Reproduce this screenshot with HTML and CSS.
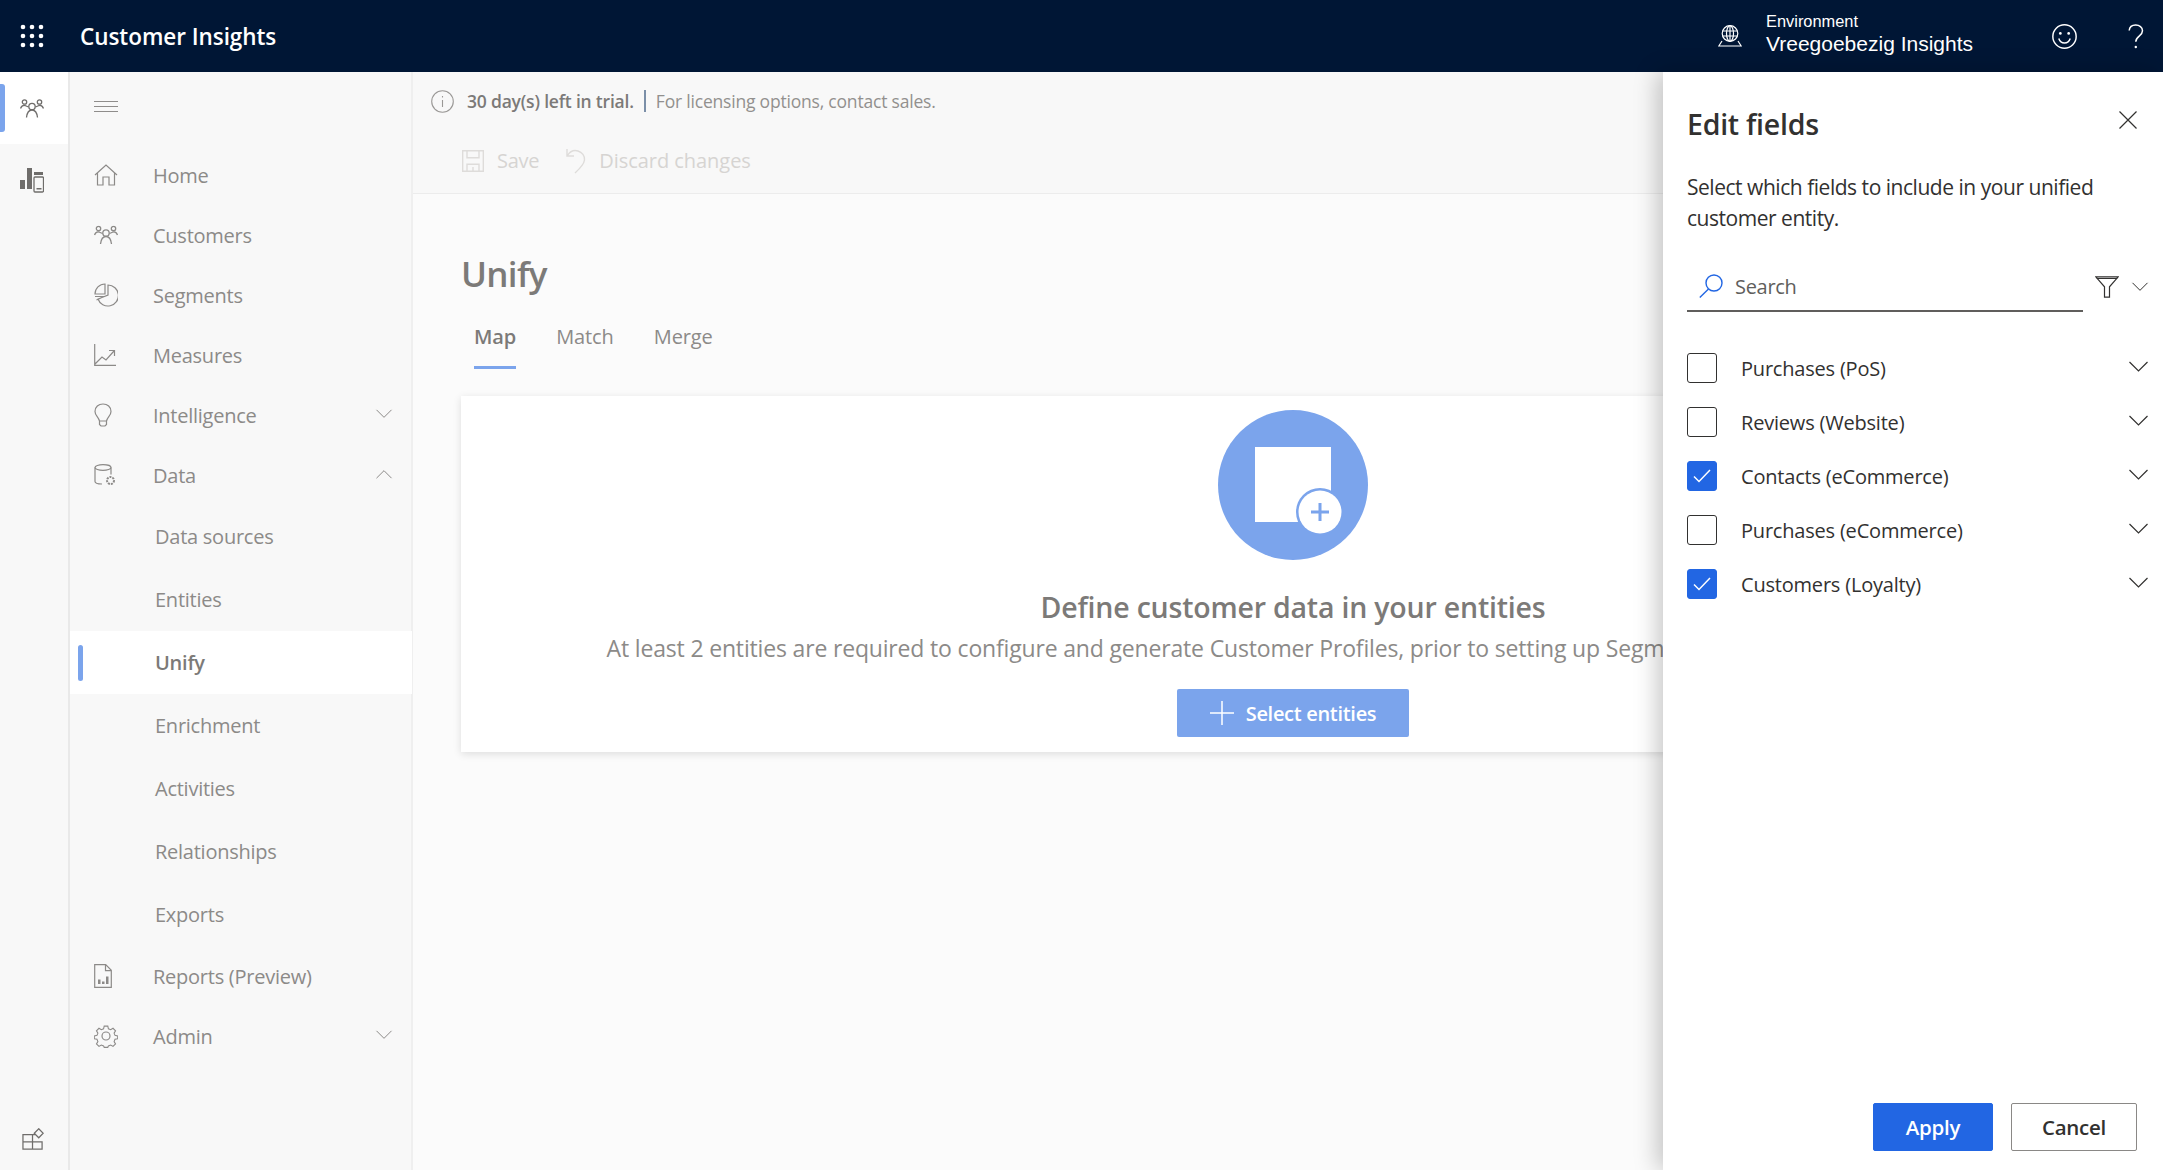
FILE: index.html
```html
<!DOCTYPE html>
<html lang="en">
<head>
    <meta charset="UTF-8" />
    <title>Customer Insights - Unify</title>
    <link rel="stylesheet" href="styles.css">
</head>
<body>
    <svg class="defs" width="0" height="0">
        <symbol id="chev" viewBox="0 0 20 12"><path d="M1 1l9 9 9-9" fill="none" stroke="currentColor" stroke-width="1.2"/></symbol>
        <symbol id="people" viewBox="0 0 24 19" fill="none" stroke="currentColor" stroke-width="1.3">
            <circle cx="4.5" cy="3" r="2.2"/><circle cx="19.5" cy="3" r="2.2"/><circle cx="12" cy="7.5" r="3.2"/>
            <path d="M.5 9.5C1.5 7 3 6 5 6.500l3.500 1.500M23.500 9.500C22.500 7 21 6 19 6.500l-3.500 1.500M6.500 18.500c.5-4.500 2.500-7.500 5.500-7.500s5 3 5.500 7.500"/>
        </symbol>
        <symbol id="check" viewBox="0 0 18 14"><path d="M1 7.500l5 5L17 1" fill="none" stroke="#fff" stroke-width="1.500"/></symbol>
    </svg>

    <header class="topbar">
        <svg class="waffle" width="24" height="24" viewBox="0 0 24 24" fill="#fff">
            <circle cx="3" cy="3" r="2.300"/><circle cx="12" cy="3" r="2.300"/><circle cx="21" cy="3" r="2.300"/>
            <circle cx="3" cy="12" r="2.300"/><circle cx="12" cy="12" r="2.300"/><circle cx="21" cy="12" r="2.300"/>
            <circle cx="3" cy="21" r="2.300"/><circle cx="12" cy="21" r="2.300"/><circle cx="21" cy="21" r="2.300"/>
        </svg>
        <div class="app-name">Customer Insights</div>
        <svg class="globe" width="24" height="22" viewBox="0 0 24 22" fill="none" stroke="#fff" stroke-width="1.200">
            <circle cx="12" cy="8.500" r="7.800"/><ellipse cx="12" cy="8.500" rx="3.500" ry="7.800"/>
            <path d="M4.500 6h15M4.500 11h15M12 .7v15.500M4 16L.8 21h22.400L20 16"/>
        </svg>
        <div class="env">
            <div class="env-label">Environment</div>
            <div class="env-name">Vreegoebezig Insights</div>
        </div>
        <svg class="smile" width="25" height="25" viewBox="0 0 24 24" fill="none" stroke="#fff" stroke-width="1.400">
            <circle cx="12" cy="12" r="11.200"/><path d="M6.500 14c1 3 3 4.300 5.500 4.300s4.500-1.300 5.500-4.300"/>
            <circle cx="8" cy="9" r="1.300" fill="#fff" stroke="none"/><circle cx="16" cy="9" r="1.300" fill="#fff" stroke="none"/>
        </svg>
        <svg class="help" width="16" height="25" viewBox="0 0 16 25" fill="none" stroke="#fff" stroke-width="1.500">
            <path d="M1.200 6.500C1.500 3 4 1 7.700 1s6.800 2.300 6.800 5.700c0 5.500-6.700 5.300-6.700 11"/>
            <circle cx="7.800" cy="23" r="1.200" fill="#fff" stroke="none"/>
        </svg>
    </header>

    <div class="layout">
        <aside class="rail">
            <div class="rail-item active">
                <svg width="24" height="19"><use href="#people"/></svg>
            </div>
            <div class="rail-item">
                <svg width="24" height="25" viewBox="0 0 24 25" fill="#6f6d6b">
                    <rect x="0" y="12" width="5" height="9"/><rect x="7" y="0" width="5" height="21"/>
                    <rect x="14" y="4" width="9" height="3"/>
                    <rect x="14" y="9" width="9.500" height="15" rx="1" fill="#f8f8f8" stroke="#6f6d6b" stroke-width="1.300"/>
                    <rect x="16.500" y="20" width="5" height="1.500"/>
                </svg>
            </div>
            <div class="rail-bottom">
                <svg width="22" height="22" viewBox="0 0 23 23" fill="none" stroke="#6f6d6b" stroke-width="1.300">
                    <path d="M1 7h10v15H1zM1 14.500h20V22H11M11 7h3"/><path d="M17.500 .8l4.700 4.700-4.700 4.700-4.700-4.700z"/>
                </svg>
            </div>
        </aside>

        <nav class="nav">
            <div class="nav-top">
                <svg width="24" height="12" viewBox="0 0 24 12" fill="none" stroke="#8f8d8b"><path d="M0 .5h24M0 5.500h24M0 10.500h24"/></svg>
            </div>
            <a class="nav-item">
                <svg class="nav-icon" width="24" height="22" viewBox="0 0 24 22" fill="none" stroke="currentColor" stroke-width="1.200"><path d="M1 11L12 1l11 10M3.500 9v12h5.500v-8h6v8h5.500V9"/></svg>
                Home
            </a>
            <a class="nav-item"><svg class="nav-icon" width="24" height="19"><use href="#people"/></svg>Customers</a>
            <a class="nav-item">
                <svg class="nav-icon" width="24" height="24" viewBox="0 0 24 24" fill="none" stroke="currentColor" stroke-width="1.200">
                    <path d="M14 2a10.500 10.500 0 1 1-10 14l10-4zM11 1A10 10 0 0 0 1 11h10zM1 13.500h9L2.500 17"/>
                </svg>
                Segments
            </a>
            <a class="nav-item">
                <svg class="nav-icon" width="22" height="22" viewBox="0 0 22 22" fill="none" stroke="currentColor" stroke-width="1.200"><path d="M.7 0v21.400H22M1 20l7-7 4 3 8-9M15 6.500h5.500V12"/></svg>
                Measures
            </a>
            <a class="nav-item">
                <svg class="nav-icon" width="18" height="24" viewBox="0 0 18 24" fill="none" stroke="currentColor" stroke-width="1.200"><path d="M5.500 18C4.500 14 1 12.500 1 8.500 1 4 4.500 1 9 1s8 3 8 7.500c0 4-3.500 5.500-4.500 9.500zM5.500 18v3.500l1.500 1.500h4l1.500-1.500V18"/></svg>
                Intelligence
                <svg class="nav-chev" width="18" height="10"><use href="#chev"/></svg>
            </a>
            <a class="nav-item">
                <svg class="nav-icon" width="22" height="22" viewBox="0 0 22 22" fill="none" stroke="currentColor" stroke-width="1.200">
                    <ellipse cx="9" cy="3.500" rx="8" ry="2.800"/><path d="M1 3.500v14c0 1.500 3 2.500 7 2.500M17 3.500v7"/><circle cx="16.500" cy="16.500" r="3.500" stroke-width="2" stroke-dasharray="2 1"/>
                </svg>
                Data
                <svg class="nav-chev flip" width="18" height="10"><use href="#chev"/></svg>
            </a>
            <a class="nav-sub">Data sources</a>
            <a class="nav-sub">Entities</a>
            <a class="nav-sub current">Unify</a>
            <a class="nav-sub">Enrichment</a>
            <a class="nav-sub">Activities</a>
            <a class="nav-sub">Relationships</a>
            <a class="nav-sub">Exports</a>
            <a class="nav-item">
                <svg class="nav-icon" width="18" height="24" viewBox="0 0 18 24" fill="none" stroke="currentColor" stroke-width="1.200">
                    <path d="M.7.7h11l5.600 5.600v17H.7zM11.500.7v6h6"/>
                    <path d="M4 15.500h2.500V20H4zM8 17.500h2.500V20H8zM12 12.500h2.500V20H12z" fill="currentColor" stroke="none"/>
                </svg>
                Reports (Preview)
            </a>
            <a class="nav-item">
                <svg class="nav-icon" width="24" height="24" viewBox="0 0 24 24" fill="none" stroke="currentColor" stroke-width="1.200">
                    <circle cx="12" cy="12" r="4"/>
                    <path d="M10 1h4l.7 3 2.500 1 2.600-1.600 2.800 2.800-1.600 2.600 1 2.500 3 .7v3l-3 .7-1 2.500 1.600 2.600-2.800 2.800-2.600-1.600-2.500 1-.7 1.600h-4l-.7-1.600-2.500-1-2.600 1.600-2.800-2.800 1.600-2.600-1-2.500-3-.7v-3l3-.7 1-2.500L1.400 6.200l2.800-2.800 2.600 1.600 2.500-1z" transform="translate(1.200 1.200) scale(.9)"/>
                </svg>
                Admin
                <svg class="nav-chev" width="18" height="10"><use href="#chev"/></svg>
            </a>
        </nav>

        <main class="main">
            <div class="trial">
                <svg width="23" height="23" viewBox="0 0 23 23" fill="none" stroke="#9a9896" stroke-width="1.100">
                    <circle cx="11.500" cy="11.500" r="10.800"/><path d="M11.500 10v7M11.500 6v1.500"/>
                </svg>
                <span class="trial-days">30 day(s) left in trial.</span>
                <span class="trial-sep"></span>
                <span>For licensing options, contact sales.</span>
            </div>
            <div class="toolbar">
                <button class="tool">
                    <svg width="22" height="22" viewBox="0 0 22 22" fill="none" stroke="#dedcda" stroke-width="1.400"><path d="M.7.7h20.600v20.600H.7zM5 .7v7h12v-7M5 21.300v-7h12v7M11 17v4"/></svg>
                    Save
                </button>
                <button class="tool wide">
                    <svg width="20" height="26" viewBox="0 0 20 26" fill="none" stroke="#dedcda" stroke-width="1.400"><path d="M1 1v7h7M1.500 7.500C4 3.500 8 1.800 12 3s7 5 6.500 9-4 8-9.500 13"/></svg>
                    Discard changes
                </button>
            </div>
            <div class="page">
                <h1 class="page-title">Unify</h1>
                <div class="tabs">
                    <a class="tab active">Map</a>
                    <a class="tab">Match</a>
                    <a class="tab">Merge</a>
                </div>
                <section class="card">
                    <svg class="card-art" width="150" height="150" viewBox="0 0 150 150">
                        <circle cx="75" cy="75" r="75" fill="#7ba4ec"/>
                        <rect x="37" y="37" width="76" height="75" fill="#fff"/>
                        <circle cx="102" cy="102" r="24" fill="#7ba4ec"/>
                        <circle cx="102" cy="102" r="21.500" fill="#fff"/>
                        <path d="M102 93v18M93 102h18" stroke="#7ba4ec" stroke-width="3" fill="none"/>
                    </svg>
                    <h2 class="card-title">Define customer data in your entities</h2>
                    <p class="card-text">At least 2 entities are required to configure and generate Customer Profiles, prior to setting up Segments, Measures and Insights.</p>
                    <button class="select-btn">
                        <svg width="24" height="24" viewBox="0 0 24 24" stroke="#fff" stroke-width="1.500" fill="none"><path d="M12 0v24M0 12h24"/></svg>
                        Select entities
                    </button>
                </section>
            </div>
        </main>

        <aside class="panel">
            <div class="panel-head">
                <h2 class="panel-title">Edit fields</h2>
                <svg class="panel-close" width="18" height="18" viewBox="0 0 18 18" stroke="#323130" stroke-width="1.200" fill="none"><path d="M.5.5l17 17M17.500.5l-17 17"/></svg>
            </div>
            <p class="panel-desc">Select which fields to include in your unified customer entity.</p>
            <div class="search-row">
                <div class="search">
                    <svg width="24" height="24" viewBox="0 0 24 24" fill="none" stroke="#2266e3" stroke-width="1.400"><circle cx="15" cy="9" r="8"/><path d="M9.500 15L.8 23.500"/></svg>
                    <span>Search</span>
                </div>
                <svg class="filter" width="24" height="22" viewBox="0 0 24 22" fill="none" stroke="#323130" stroke-width="1.200"><path d="M.8.8h22.400l-8.700 10v10.400h-5V10.800zM1.500 2.500h21"/></svg>
                <svg class="filter-chev" width="18" height="10"><use href="#chev"/></svg>
            </div>
            <ul class="fields">
                <li class="field"><span class="box"></span>Purchases (PoS)<svg class="field-chev" width="21" height="12"><use href="#chev"/></svg></li>
                <li class="field"><span class="box"></span>Reviews (Website)<svg class="field-chev" width="21" height="12"><use href="#chev"/></svg></li>
                <li class="field"><span class="box checked"><svg width="18" height="14"><use href="#check"/></svg></span>Contacts (eCommerce)<svg class="field-chev" width="21" height="12"><use href="#chev"/></svg></li>
                <li class="field"><span class="box"></span>Purchases (eCommerce)<svg class="field-chev" width="21" height="12"><use href="#chev"/></svg></li>
                <li class="field"><span class="box checked"><svg width="18" height="14"><use href="#check"/></svg></span>Customers (Loyalty)<svg class="field-chev" width="21" height="12"><use href="#chev"/></svg></li>
            </ul>
            <div class="panel-foot">
                <button class="btn primary">Apply</button>
                <button class="btn">Cancel</button>
            </div>
        </aside>
    </div>
</body>
</html>
```

FILE: styles.css
```css
* {
    box-sizing: border-box;
}
body {
    margin: 0;
    height: 1170px;
    overflow: hidden;
    font-family: "Open Sans", "Noto Sans", sans-serif;
    background: #fbfbfb;
    display: flex;
    flex-direction: column;
}
.defs {
    position: absolute;
}
h1, h2, p, ul {
    margin: 0;
    padding: 0;
}

/* top bar */
.topbar {
    height: 72px;
    flex: none;
    background: #001635;
    color: #fff;
    display: flex;
    align-items: center;
    padding-left: 20px;
}
.app-name {
    margin-left: 36px;
    font-size: 22.500px;
    font-weight: 600;
    letter-spacing: -0.05px;
}
.globe {
    margin-left: auto;
}
.env {
    margin-left: 24px;
    font-family: "Liberation Sans", sans-serif;
    width: 286px;
}
.env-label {
    font-size: 16.400px;
    line-height: 20px;
    margin-top: -4px;
}
.env-name {
    font-size: 21px;
    line-height: 26px;
}
.help {
    margin-left: 51px;
    margin-right: 19px;
}

.layout {
    flex: 1;
    display: flex;
    min-height: 0;
}

/* icon rail */
.rail {
    width: 70px;
    flex: none;
    background: #f8f8f8;
    border-right: 2px solid #e9e9e9;
    display: flex;
    flex-direction: column;
}
.rail-item {
    height: 72px;
    display: flex;
    align-items: center;
    justify-content: center;
    color: #6f6d6b;
    position: relative;
}
.rail-item svg {
    margin-right: 4px;
}
.rail-item.active {
    background: #fff;
}
.rail-item.active::before {
    content: "";
    position: absolute;
    left: 0;
    top: 12px;
    width: 5px;
    height: 48px;
    background: #7ba4ec;
    border-radius: 0 3px 3px 0;
}
.rail-bottom {
    margin-top: auto;
    padding: 0 0 15px 22px;
}

/* nav */
.nav {
    width: 343px;
    flex: none;
    background: #f8f8f8;
    border-right: 2px solid #efefef;
    color: #8c8a88;
    font-size: 20px;
    letter-spacing: -0.25px;
}
.nav-top {
    height: 73px;
    padding: 29px 0 0 24px;
}
.nav-top svg {
    display: block;
}
.nav-item {
    height: 60px;
    display: flex;
    align-items: center;
    position: relative;
    padding-left: 83px;
}
.nav-icon {
    position: absolute;
    left: 24px;
    top: 50%;
    transform: translateY(-50%);
}
.nav-chev {
    margin-left: auto;
    margin-right: 18px;
    margin-top: -2px;
}
.flip {
    transform: rotate(180deg);
}
.nav-sub {
    height: 63px;
    display: flex;
    align-items: center;
    padding-left: 85px;
}
.nav-sub.current {
    background: #fff;
    color: #7c7a78;
    font-weight: 600;
    position: relative;
    margin-right: -1px;
}
.nav-sub.current::before {
    content: "";
    position: absolute;
    left: 8px;
    top: 14px;
    width: 5px;
    height: 36px;
    background: #7ba4ec;
    border-radius: 3px;
}

/* main area */
.main {
    flex: 1;
    min-width: 0;
    overflow: hidden;
}
.trial {
    height: 58px;
    background: #f8f8f8;
    display: flex;
    align-items: center;
    padding: 0 0 0 18px;
    font-size: 17.500px;
    letter-spacing: -0.2px;
    color: #92908e;
}
.trial-days {
    margin-left: 13px;
    color: #7c7a78;
    font-weight: 600;
}
.trial-sep {
    width: 2px;
    height: 22px;
    background: #7b8fa8;
    margin: 0 10px;
}
.toolbar {
    height: 64px;
    background: #f8f8f8;
    border-bottom: 1px solid #ececec;
    display: flex;
    align-items: flex-start;
    padding: 17px 0 0 49px;
    gap: 27px;
}
.tool {
    border: 0;
    background: none;
    padding: 0;
    font: inherit;
    font-size: 20px;
    letter-spacing: -0.25px;
    color: #d6d4d2;
    display: flex;
    align-items: center;
    gap: 13px;
    height: 27px;
}
.tool.wide {
    letter-spacing: -0.05px;
}
.page {
    padding: 56px 0 0 48px;
}
.page-title {
    font-size: 35px;
    line-height: 48px;
    font-weight: 600;
    letter-spacing: -0.7px;
    color: #7c7a78;
}
.tabs {
    display: flex;
    height: 71px;
    padding-left: 13px;
    gap: 40px;
}
.tab {
    font-size: 20px;
    letter-spacing: -0.1px;
    line-height: 78px;
    color: #8c8a88;
    position: relative;
}
.tab.active {
    color: #7c7a78;
    font-weight: 600;
    border-bottom: 3px solid #7ba4ec;
}
.card {
    margin-top: 27px;
    width: 1664px;
    height: 356px;
    background: #fff;
    box-shadow: 0 2px 8px rgba(0, 0, 0, 0.12);
    display: flex;
    flex-direction: column;
    align-items: center;
    padding-top: 14px;
}
.card-art {
    flex: none;
}
.card-title {
    margin-top: 27px;
    font-size: 28.500px;
    line-height: 40px;
    font-weight: 600;
    letter-spacing: -0.2px;
    color: #7c7a78;
}
.card-text {
    margin: 1px 15px 1px 0;
    font-size: 23px;
    line-height: 40px;
    letter-spacing: -0.17px;
    white-space: nowrap;
    color: #8c8a88;
}
.select-btn {
    margin-top: 20px;
    width: 232px;
    height: 48px;
    border: 0;
    border-radius: 2px;
    background: #7ba4ec;
    color: #fff;
    font: inherit;
    font-size: 20px;
    font-weight: 600;
    letter-spacing: -0.3px;
    display: flex;
    align-items: center;
    justify-content: center;
    gap: 12px;
}

/* edit fields panel */
.panel {
    width: 500px;
    flex: none;
    background: #fff;
    box-shadow: -6px 0 22px rgba(0, 0, 0, 0.22);
    padding: 0 14px 19px 24px;
    display: flex;
    flex-direction: column;
    color: #323130;
    position: relative;
}
.panel-head {
    display: flex;
    align-items: center;
    justify-content: space-between;
    height: 104px;
    padding-right: 12px;
}
.panel-title {
    font-size: 28.500px;
    font-weight: 600;
    letter-spacing: -0.25px;
}
.panel-close {
    margin-top: -8px;
}
.panel-desc {
    font-size: 21px;
    line-height: 31px;
    letter-spacing: -0.47px;
    width: 440px;
    margin-top: -4px;
}
.search-row {
    display: flex;
    align-items: center;
    margin-top: 28px;
    height: 50px;
}
.search {
    width: 396px;
    height: 50px;
    border-bottom: 2px solid #605e5c;
    display: flex;
    align-items: center;
    padding-left: 12px;
    gap: 12px;
    font-size: 20px;
    letter-spacing: -0.3px;
    color: #605e5c;
}
.filter {
    margin-left: 12px;
}
.filter-chev {
    margin-left: 12px;
    color: #323130;
}
.fields {
    list-style: none;
    margin-top: 29px;
}
.field {
    height: 54px;
    display: flex;
    align-items: center;
    font-size: 20px;
    letter-spacing: -0.2px;
}
.box {
    width: 30px;
    height: 30px;
    border: 1.500px solid #323130;
    border-radius: 3px;
    margin-right: 24px;
    display: flex;
    align-items: center;
    justify-content: center;
}
.box.checked {
    background: #2266e3;
    border-color: #2266e3;
}
.field-chev {
    margin-left: auto;
    color: #323130;
    margin-top: -2px;
}
.panel-foot {
    margin-top: auto;
    display: flex;
    justify-content: flex-end;
    gap: 18px;
    padding-right: 12px;
}
.btn {
    height: 48px;
    width: 126px;
    border: 1.500px solid #8a8886;
    border-radius: 2px;
    background: #fff;
    color: #323130;
    font: inherit;
    font-size: 20.500px;
    font-weight: 600;
    letter-spacing: -0.3px;
}
.btn.primary {
    width: 120px;
    background: #2266e3;
    border-color: #2266e3;
    color: #fff;
}
```
